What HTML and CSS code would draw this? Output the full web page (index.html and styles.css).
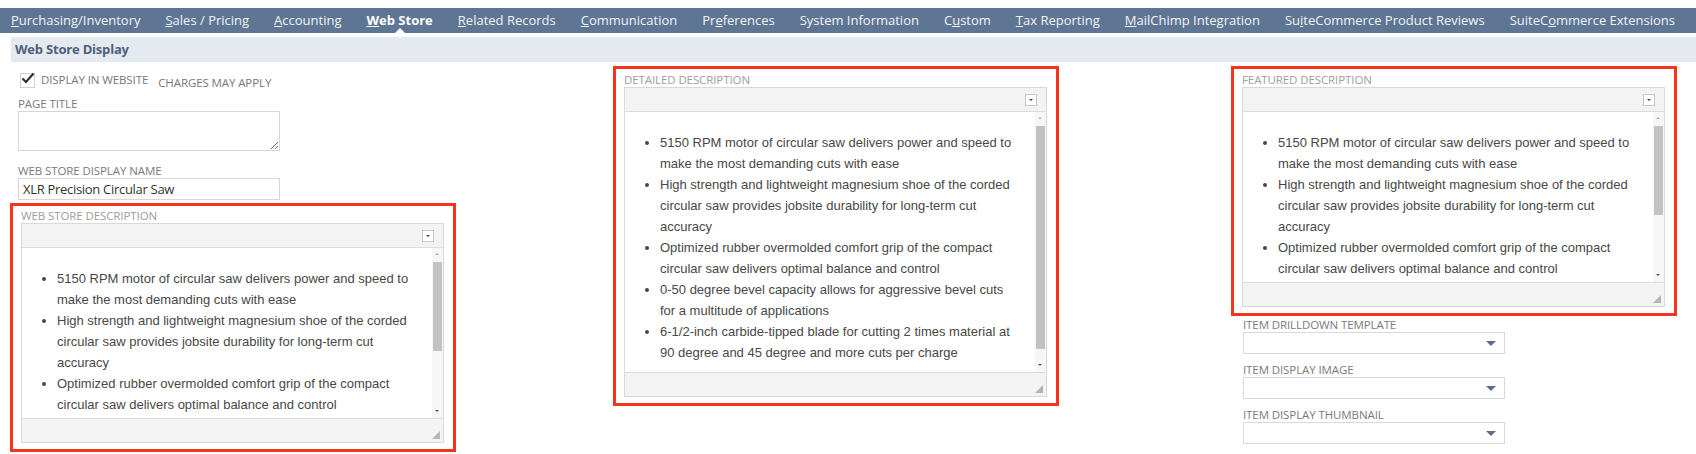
FILE: index.html
```html
<!DOCTYPE html>
<html lang="en">
<head>
    <meta charset="UTF-8">
    <title>Item - Web Store</title>
    <link rel="stylesheet" href="styles.css">
</head>
<body>
    <nav class="tabs">
        <a href="#"><u>P</u>urchasing/Inventory</a>
        <a href="#"><u>S</u>ales / Pricing</a>
        <a href="#"><u>A</u>ccounting</a>
        <a href="#" class="active"><u>W</u>eb Store</a>
        <a href="#"><u>R</u>elated Records</a>
        <a href="#"><u>C</u>ommunication</a>
        <a href="#">Pr<u>e</u>ferences</a>
        <a href="#">System Information</a>
        <a href="#">C<u>u</u>stom</a>
        <a href="#"><u>T</u>ax Reporting</a>
        <a href="#"><u>M</u>ailChimp Integration</a>
        <a href="#">Su<u>i</u>teCommerce Product Reviews</a>
        <a href="#">SuiteC<u>o</u>mmerce Extensions</a>
    </nav>

    <div class="section-head">Web Store Display</div>

    <div class="form-body">
        <!-- left column -->
        <div class="col col-left">
            <div class="check-row">
                <span class="checkbox">
                    <svg width="14" height="12" viewBox="0 0 14 12"><path d="M1.5 6.5 L5 10 L12.5 1.5" fill="none" stroke="#2f2f2f" stroke-width="2.2"/></svg>
                </span>
                <span class="check-label">Display in Website</span>
                <span class="check-note">Charges May Apply</span>
            </div>

            <div class="field">
                <label>Page Title</label>
                <textarea class="text-area"></textarea>
            </div>

            <div class="field">
                <label>Web Store Display Name</label>
                <input class="text-input" type="text" value="XLR Precision Circular Saw">
            </div>

            <div class="callout callout-first">
                <label>Web Store Description</label>
                <div class="editor">
                    <div class="editor-bar"><span class="bar-btn"></span></div>
                    <div class="editor-body">
                        <div class="editor-text">
                            <ul>
                                <li>5150 RPM motor of circular saw delivers power and speed to make the most demanding cuts with ease</li>
                                <li>High strength and lightweight magnesium shoe of the corded circular saw provides jobsite durability for long-term cut accuracy</li>
                                <li>Optimized rubber overmolded comfort grip of the compact circular saw delivers optimal balance and control</li>
                                <li>0-50 degree bevel capacity allows for aggressive bevel cuts for a multitude of applications</li>
                                <li>6-1/2-inch carbide-tipped blade for cutting 2 times material at 90 degree and 45 degree and more cuts per charge</li>
                            </ul>
                        </div>
                        <div class="scrollbar">
                            <span class="scroll-up"></span>
                            <div class="scroll-track"><div class="scroll-thumb"></div></div>
                            <span class="scroll-down"></span>
                        </div>
                    </div>
                    <div class="editor-foot"><span class="grip"></span></div>
                </div>
            </div>
        </div>

        <!-- middle column -->
        <div class="col">
            <div class="callout">
                <label>Detailed Description</label>
                <div class="editor">
                    <div class="editor-bar"><span class="bar-btn"></span></div>
                    <div class="editor-body tall">
                        <div class="editor-text">
                            <ul>
                                <li>5150 RPM motor of circular saw delivers power and speed to make the most demanding cuts with ease</li>
                                <li>High strength and lightweight magnesium shoe of the corded circular saw provides jobsite durability for long-term cut accuracy</li>
                                <li>Optimized rubber overmolded comfort grip of the compact circular saw delivers optimal balance and control</li>
                                <li>0-50 degree bevel capacity allows for aggressive bevel cuts for a multitude of applications</li>
                                <li>6-1/2-inch carbide-tipped blade for cutting 2 times material at 90 degree and 45 degree and more cuts per charge</li>
                            </ul>
                        </div>
                        <div class="scrollbar">
                            <span class="scroll-up"></span>
                            <div class="scroll-track"><div class="scroll-thumb"></div></div>
                            <span class="scroll-down"></span>
                        </div>
                    </div>
                    <div class="editor-foot"><span class="grip"></span></div>
                </div>
            </div>
        </div>

        <!-- right column -->
        <div class="col">
            <div class="callout">
                <label>Featured Description</label>
                <div class="editor">
                    <div class="editor-bar"><span class="bar-btn"></span></div>
                    <div class="editor-body">
                        <div class="editor-text">
                            <ul>
                                <li>5150 RPM motor of circular saw delivers power and speed to make the most demanding cuts with ease</li>
                                <li>High strength and lightweight magnesium shoe of the corded circular saw provides jobsite durability for long-term cut accuracy</li>
                                <li>Optimized rubber overmolded comfort grip of the compact circular saw delivers optimal balance and control</li>
                                <li>0-50 degree bevel capacity allows for aggressive bevel cuts for a multitude of applications</li>
                                <li>6-1/2-inch carbide-tipped blade for cutting 2 times material at 90 degree and 45 degree and more cuts per charge</li>
                            </ul>
                        </div>
                        <div class="scrollbar">
                            <span class="scroll-up"></span>
                            <div class="scroll-track"><div class="scroll-thumb"></div></div>
                            <span class="scroll-down"></span>
                        </div>
                    </div>
                    <div class="editor-foot"><span class="grip"></span></div>
                </div>
            </div>

            <div class="field field-select">
                <label>Item Drilldown Template</label>
                <div class="select-box"><span class="arrow"></span></div>
            </div>
            <div class="field field-select">
                <label>Item Display Image</label>
                <div class="select-box"><span class="arrow"></span></div>
            </div>
            <div class="field field-select">
                <label>Item Display Thumbnail</label>
                <div class="select-box"><span class="arrow"></span></div>
            </div>
        </div>
    </div>
</body>
</html>
```

FILE: styles.css
```css
body {
    margin: 0;
    padding: 0;
    background-color: #fff;
    font-family: "Open Sans", sans-serif;
    color: #333;
}

/* top tab strip */
.tabs {
    display: flex;
    align-items: center;
    gap: 25px;
    margin-top: 8px;
    height: 25px;
    padding-left: 11px;
    background-color: #5f7594;
    white-space: nowrap;
    overflow: hidden;
}

.tabs a {
    position: relative;
    color: #f1f3f6;
    text-decoration: none;
    font-size: 13px;
    line-height: 25px;
}

.tabs a.active {
    font-weight: bold;
    color: #fff;
}

.tabs a.active::after {
    content: "";
    position: absolute;
    left: 50%;
    bottom: 0;
    margin-left: -5px;
    border-left: 5px solid transparent;
    border-right: 5px solid transparent;
    border-bottom: 5px solid #fff;
}

.section-head {
    margin: 4px 0 0 11px;
    height: 25px;
    line-height: 25px;
    padding-left: 4px;
    background-color: #e5e9f0;
    color: #4e5f7b;
    font-size: 13px;
    font-weight: bold;
    letter-spacing: -0.2px;
}

/* three columns of fields */
.form-body {
    display: grid;
    grid-template-columns: 603px 618px 1fr;
    align-items: start;
    padding-left: 10px;
}

.col {
    margin-top: 4px;
}

.col-left {
    margin-top: 9px;
}

.col-left .field {
    padding-left: 8px;
}

label {
    display: block;
    font-size: 11.5px;
    line-height: 14px;
    color: #7a7a7a;
    text-transform: uppercase;
    letter-spacing: -0.1px;
}

.check-row {
    display: flex;
    align-items: center;
    height: 18px;
    padding-left: 10px;
    font-size: 11.5px;
    color: #777;
    text-transform: uppercase;
    letter-spacing: -0.1px;
}

.checkbox {
    display: inline-block;
    position: relative;
    width: 13px;
    height: 13px;
    border: 1px solid #d2d2d2;
    background: #fff;
    margin-right: 6px;
}

.checkbox svg {
    position: absolute;
    left: 0;
    top: -2px;
}

.check-label {
    line-height: 14px;
}

.check-note {
    margin-left: 10px;
    line-height: 14px;
    margin-top: 5px;
}

.field {
    margin-top: 8px;
}

.text-area {
    display: block;
    width: 262px;
    height: 40px;
    box-sizing: border-box;
    border: 1px solid #d6d6d6;
    margin: 0;
    padding: 2px 4px;
    font-family: "Open Sans", sans-serif;
}

.col-left .field + .field {
    margin-top: 13px;
}

.text-input {
    display: block;
    width: 262px;
    height: 22px;
    box-sizing: border-box;
    border: 1px solid #d6d6d6;
    margin: 0;
    padding: 0 4px;
    font-family: "Open Sans", sans-serif;
    font-size: 13px;
    letter-spacing: -0.3px;
    color: #333;
}

/* red highlight round a rich text field */
.callout {
    width: 446px;
    box-sizing: border-box;
    border: 3px solid #f4341c;
    padding: 4px 9px 6px 8px;
}

.callout-first {
    margin-top: 3px;
    padding-top: 3px;
}

.callout label {
    color: #9d9d9d;
}

.editor {
    border: 1px solid #d9d9d9;
    background: #fff;
}

.editor-bar {
    height: 23px;
    border-bottom: 1px solid #dcdcdc;
    background-color: #f3f3f3;
    display: flex;
    align-items: center;
    justify-content: flex-end;
    padding-right: 9px;
}

.bar-btn {
    position: relative;
    width: 10px;
    height: 10px;
    border: 1px solid #c9c9c9;
    background: #fff;
}

.bar-btn::after {
    content: "";
    position: absolute;
    left: 3px;
    top: 4px;
    border-left: 2px solid transparent;
    border-right: 2px solid transparent;
    border-top: 2px solid #444;
}

.editor-body {
    display: flex;
    height: 170px;
}

.editor-body.tall {
    height: 260px;
}

.editor-text {
    flex: 1;
    overflow: hidden;
    font-family: "Liberation Sans", Arial, sans-serif;
    font-size: 13px;
    line-height: 21px;
    color: #474747;
}

.editor-text ul {
    margin: 0;
    padding: 20px 14px 20px 35px;
}

/* drawn scrollbar of the editor frame */
.scrollbar {
    display: flex;
    flex-direction: column;
    width: 11px;
    background-color: #f6f6f6;
}

.scroll-up,
.scroll-down {
    position: relative;
    height: 13px;
}

.scroll-up::after,
.scroll-down::after {
    content: "";
    position: absolute;
    left: 3px;
    top: 5px;
    border-left: 2px solid transparent;
    border-right: 2px solid transparent;
}

.scroll-up::after {
    border-bottom: 2px solid #b5b5b5;
}

.scroll-down::after {
    border-top: 2px solid #555;
}

.scroll-track {
    flex: 1;
    padding: 1px 1px 0 1px;
}

.scroll-thumb {
    height: 89px;
    background-color: #c2c2c2;
}

.tall .scroll-thumb {
    height: 223px;
}

.editor-foot {
    position: relative;
    height: 23px;
    border-top: 1px solid #dcdcdc;
    background-color: #f3f3f3;
}

.grip {
    position: absolute;
    right: 3px;
    bottom: 3px;
    border-left: 8px solid transparent;
    border-bottom: 8px solid #b5b5b5;
}

.field-select {
    margin-top: 2px;
    padding-left: 12px;
}

.field-select + .field-select {
    margin-top: 9px;
}

.select-box {
    position: relative;
    width: 262px;
    height: 22px;
    box-sizing: border-box;
    border: 1px solid #d9d9d9;
    background: #fff;
}

.select-box .arrow {
    position: absolute;
    right: 8px;
    top: 8px;
    border-left: 5px solid transparent;
    border-right: 5px solid transparent;
    border-top: 5px solid #5d6d86;
}
```
